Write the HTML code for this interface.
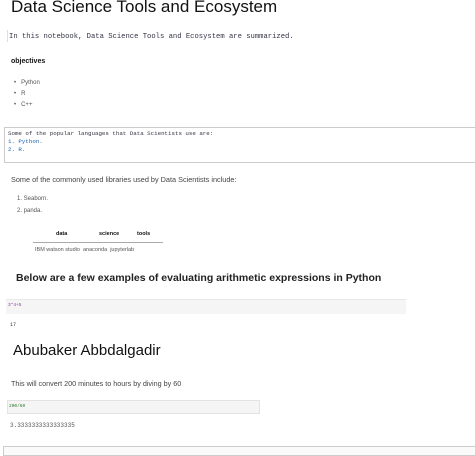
<!DOCTYPE html>
<html><head><style>
body{margin:0;width:475px;height:452px;overflow:hidden;background:#fff;font-family:"Liberation Sans",sans-serif;color:#333;position:relative}
.a{position:absolute;white-space:nowrap}
.m{font-family:"Liberation Mono","DejaVu Sans Mono",monospace}
</style></head><body>
<div class="a" style="left:11px;top:-3px;font-size:17px;color:#111">Data Science Tools and Ecosystem</div>
<div class="a" style="left:7px;top:30px;width:1px;height:12px;background:#dde"></div>
<div class="a m" style="left:9px;top:33px;font-size:7.2px;color:#334">In this notebook, Data Science Tools and Ecosystem are summarized.</div>
<div class="a" style="left:11px;top:58px;font-size:7px;font-weight:bold;color:#111">objectives</div>
<div class="a" style="left:14px;top:78px;font-size:6px;line-height:11px;color:#555">•&nbsp;&nbsp;&nbsp;Python<br>•&nbsp;&nbsp;&nbsp;R<br>•&nbsp;&nbsp;&nbsp;C++</div>
<div class="a" style="left:4px;top:127px;width:475px;height:36px;border:1px solid #ccc;box-sizing:border-box"></div>
<div class="a m" style="left:8px;top:130px;font-size:5.8px;line-height:8px;color:#334">Some of the popular languages that Data Scientists use are:<br><span style="color:#1a5fb4">1. Python.<br>2. R.</span></div>
<div class="a" style="left:11px;top:175px;font-size:7.3px;color:#444">Some of the commonly used libraries used by Data Scientists include:</div>
<div class="a" style="left:17px;top:193px;font-size:6px;line-height:12px;color:#555">1. Seaborn.<br>2. panda.</div>
<div class="a" style="left:33px;top:231px;width:130px;font-size:5.5px;font-weight:bold;color:#111">
<span class="a" style="left:23px">data</span><span class="a" style="left:66px">science</span><span class="a" style="left:104px">tools</span></div>
<div class="a" style="left:33px;top:242px;width:130px;height:1px;background:#aaa"></div>
<div class="a" style="left:35px;top:247px;font-size:5.5px;color:#555">IBM watson studio&nbsp; anaconda&nbsp; jupyterlab</div>
<div class="a" style="left:16px;top:272px;font-size:10.5px;font-weight:bold;color:#222">Below are a few examples of evaluating arithmetic expressions in Python</div>
<div class="a" style="left:6px;top:299px;width:400px;height:14px;background:#f5f5f5;border-top:1px solid #e8e8e8"></div>
<div class="a m" style="left:8px;top:303px;font-size:4.5px;color:#7a3e9d">3*4+5</div>
<div class="a m" style="left:10px;top:322px;font-size:5px;color:#333">17</div>
<div class="a" style="left:13px;top:342px;font-size:15px;color:#111">Abubaker Abbdalgadir</div>
<div class="a" style="left:11px;top:379px;font-size:7.2px;color:#444">This will convert 200 minutes to hours by diving by 60</div>
<div class="a" style="left:7px;top:400px;width:253px;height:14px;background:#f5f5f5;border:1px solid #e3e3e3;box-sizing:border-box"></div>
<div class="a m" style="left:9px;top:404px;font-size:4.5px;color:#2a7a2a">200/60</div>
<div class="a m" style="left:10px;top:422px;font-size:6px;color:#555">3.3333333333333335</div>
<div class="a" style="left:3px;top:446px;width:475px;height:10px;border:1px solid #ccc;background:#fafafa;box-sizing:border-box"></div>
</body></html>
